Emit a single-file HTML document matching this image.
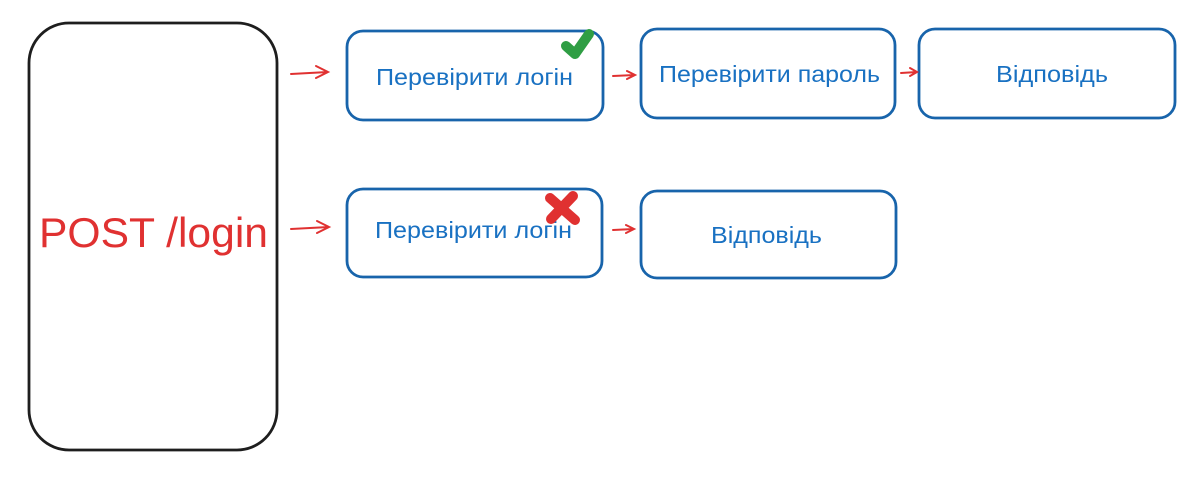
<!DOCTYPE html>
<html><head><meta charset="utf-8"><style>
html,body{margin:0;padding:0;background:#fff;width:1200px;height:478px;overflow:hidden}
svg{display:block}
text{font-family:"Liberation Sans",sans-serif}
</style></head><body>
<svg width="1200" height="478" viewBox="0 0 1200 478">
<rect x="29" y="23" width="248" height="427" rx="40" fill="none" stroke="#1e1e1e" stroke-width="2.8"/>
<text x="39" y="247" font-size="42" fill="#e03131" textLength="229" lengthAdjust="spacingAndGlyphs">POST /login</text>
<g fill="none" stroke="#1864ab" stroke-width="2.8">
<rect x="347" y="31" width="256" height="89" rx="16"/>
<rect x="641" y="29" width="254" height="89" rx="16"/>
<rect x="919" y="29" width="256" height="89" rx="16"/>
<rect x="347" y="189" width="255" height="88" rx="16"/>
<rect x="641" y="191" width="255" height="87" rx="16"/>
</g>
<g font-size="23" fill="#1971c2">
<text x="376" y="85" textLength="197" lengthAdjust="spacingAndGlyphs">Перевірити логін</text>
<text x="659" y="82" textLength="221" lengthAdjust="spacingAndGlyphs">Перевірити пароль</text>
<text x="996" y="82" textLength="112" lengthAdjust="spacingAndGlyphs">Відповідь</text>
<text x="375" y="238" textLength="197" lengthAdjust="spacingAndGlyphs">Перевірити логін</text>
<text x="711" y="243" textLength="111" lengthAdjust="spacingAndGlyphs">Відповідь</text>
</g>
<g fill="none" stroke="#e03131" stroke-width="2" stroke-linecap="round">
<path d="M291 74 L328 72 M316 66 L328 72 L316 78"/>
<path d="M613 76 L635 75 M627 71 L635 75 L627 79"/>
<path d="M901 73 L917 72 M910 68 L917 72 L910 76"/>
<path d="M291 229 L329 227 M317 221 L329 227 L317 233"/>
<path d="M613 230 L634 229 M626 225 L634 229 L626 233"/>
</g>
<path d="M566 46 L575 54 L589 34" fill="none" stroke="#2f9e44" stroke-width="10" stroke-linecap="round" stroke-linejoin="round"/>
<path d="M550 198 L575 220 M573 196 L551 219" fill="none" stroke="#e03131" stroke-width="10" stroke-linecap="round"/>
</svg>
</body></html>
